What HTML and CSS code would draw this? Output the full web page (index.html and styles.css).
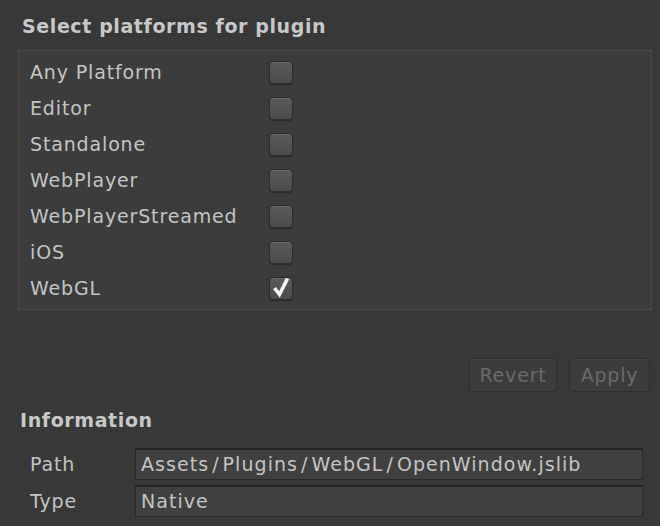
FILE: index.html
```html
<!DOCTYPE html>
<html>
<head>
<meta charset="utf-8">
<link rel="stylesheet" href="styles.css">
</head>
<body>
<div class="panel">
  <h2 class="title">Select platforms for plugin</h2>
  <div class="platforms">
    <div class="row"><span class="label">Any Platform</span><span class="check"></span></div>
    <div class="row"><span class="label">Editor</span><span class="check"></span></div>
    <div class="row"><span class="label">Standalone</span><span class="check"></span></div>
    <div class="row"><span class="label">WebPlayer</span><span class="check"></span></div>
    <div class="row"><span class="label">WebPlayerStreamed</span><span class="check"></span></div>
    <div class="row"><span class="label">iOS</span><span class="check"></span></div>
    <div class="row"><span class="label">WebGL</span><span class="check checked"><svg viewBox="0 0 24 26" width="24" height="26"><polyline points="5.5,14 10.5,20.5 18.5,4.5" fill="none" stroke="#f4f4f4" stroke-width="3.6" stroke-linejoin="miter" stroke-linecap="butt"/></svg></span></div>
  </div>
  <div class="actions">
    <button class="btn revert">Revert</button>
    <button class="btn apply">Apply</button>
  </div>
  <h2 class="title info">Information</h2>
  <div class="field-row"><span class="flabel">Path</span><div class="field">Assets<span class="sep">/</span>Plugins<span class="sep">/</span>WebGL<span class="sep">/</span>OpenWindow.jslib</div></div>
  <div class="field-row"><span class="flabel">Type</span><div class="field">Native</div></div>
</div>
</body>
</html>
```
FILE: styles.css
```css
html, body {
  margin: 0;
  padding: 0;
  background: #383838;
}
body {
  width: 660px;
  height: 526px;
  overflow: hidden;
  font-family: "DejaVu Sans", Verdana, sans-serif;
  color: #c4c4c4;
}
.panel {
  padding: 0 8px 0 18px;
}
.title {
  margin: 0;
  font-size: 19px;
  font-weight: bold;
  color: #c8c8c8;
  height: 50px;
  line-height: 52px;
  padding-left: 4px;
  letter-spacing: 0.6px;
}
.platforms {
  border: 1px solid #4a4a4a;
  background: #3c3c3c;
  padding: 3px 0 3px 11px;
}
.row {
  display: flex;
  align-items: center;
  height: 36px;
}
.label {
  width: 239px;
  font-size: 19px;
  letter-spacing: 0.85px;
  color: #c4c4c4;
}
.check {
  position: relative;
  box-sizing: border-box;
  width: 24px;
  height: 23px;
  border-radius: 4px;
  background: linear-gradient(#5a5a5a, #4b4b4b);
  border: 1px solid #2c2c2c;
  box-shadow: inset 0 1px 0 #6a6a6a, 0 1px 1px #2a2a2a;
}
.check svg {
  position: absolute;
  left: -1px;
  top: -4px;
}
.actions {
  display: flex;
  justify-content: flex-end;
  gap: 12px;
  margin-top: 48px;
  padding-right: 2px;
}
.btn {
  box-sizing: border-box;
  height: 34px;
  font-family: "DejaVu Sans", Verdana, sans-serif;
  font-size: 19px;
  letter-spacing: 0.8px;
  color: #6a6a6a;
  background: #3c3c3c;
  border: 1px solid #2e2e2e;
  border-radius: 4px;
  box-shadow: inset 0 1px 0 #444;
  padding: 0;
}
.revert { width: 88px; }
.apply { width: 81px; }
.title.info {
  height: 53px;
  line-height: 56px;
  padding-left: 2px;
}
.field-row {
  display: flex;
  align-items: center;
  height: 37px;
}
.flabel {
  width: 105px;
  padding-left: 12px;
  font-size: 19px;
  letter-spacing: 0.85px;
  color: #c4c4c4;
}
.field {
  box-sizing: border-box;
  width: 508px;
  height: 32px;
  background: #404040;
  border: 1px solid #2a2a2a;
  border-top: 2px solid #232323;
  padding-left: 5px;
  font-size: 19px;
  letter-spacing: 1.05px;
  line-height: 28px;
  color: #c4c4c4;
  white-space: nowrap;
}
.sep {
  margin: 0 3px;
}
```
